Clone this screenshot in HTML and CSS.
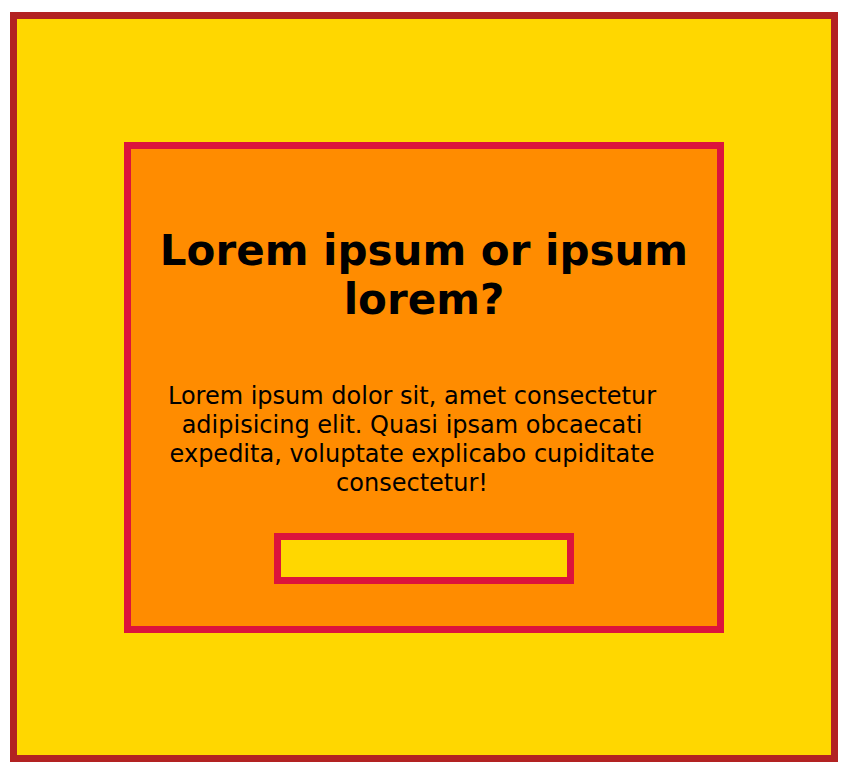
FILE: index.html
```html
<!DOCTYPE html>
<html lang="en">
<head>
<meta charset="utf-8">
<title>Lorem ipsum</title>
<link rel="stylesheet" href="styles.css">
</head>
<body>
<div class="frame">
  <section class="card">
    <h1 class="card-title">Lorem ipsum or ipsum lorem?</h1>
    <p class="card-text">Lorem ipsum dolor sit, amet consectetur adipisicing elit. Quasi ipsam obcaecati expedita, voluptate explicabo cupiditate consectetur!</p>
    <button class="card-button" type="button"></button>
  </section>
</div>
</body>
</html>
```
FILE: styles.css
```css
html, body {
  margin: 0;
  padding: 0;
  background: #ffffff;
}
body {
  font-family: "DejaVu Sans", Verdana, sans-serif;
  color: #000000;
}
.frame {
  box-sizing: border-box;
  margin: 12px 9px 10px 10px;
  height: 750px;
  padding-top: 123px;
  border: 7px solid #b22222;
  background: #ffd700;
  display: flex;
  align-items: flex-start;
  justify-content: center;
}
.card {
  width: 536px;
  border: 7px solid #dc143c;
  background: #ff8c00;
  padding: 77px 25px 42px;
  text-align: center;
}
.card-title {
  margin: 0;
  font-size: 42px;
  font-weight: bold;
  line-height: 49px;
}
.card-text {
  margin: 58px 0 0;
  padding-right: 24px;
  font-size: 24px;
  line-height: 29px;
}
.card-button {
  display: block;
  box-sizing: border-box;
  width: 300px;
  height: 51px;
  margin: 35px auto 0;
  padding: 0;
  border: 7px solid #dc143c;
  background: #ffd700;
}
```
